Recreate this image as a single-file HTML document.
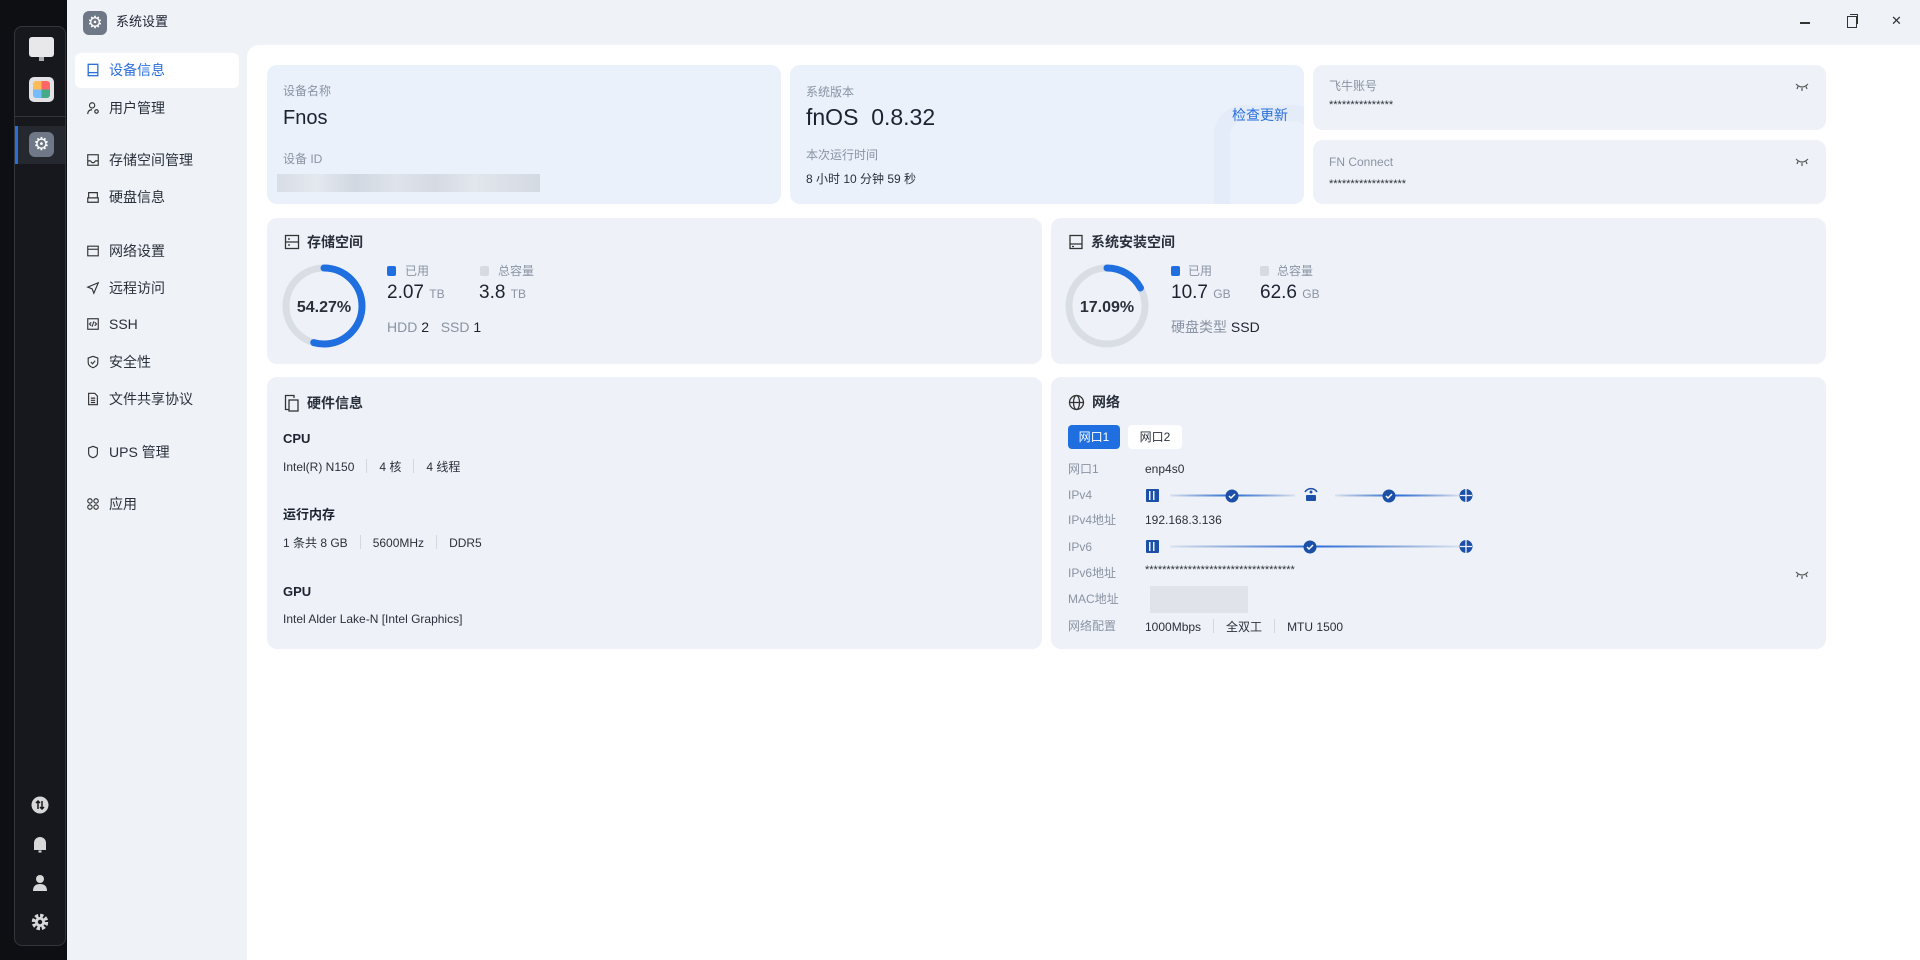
<!DOCTYPE html>
<html><head><meta charset="utf-8">
<style>
*{margin:0;padding:0;box-sizing:border-box}
body{width:1920px;height:960px;overflow:hidden;background:#0e0f12;font-family:"Liberation Sans","Noto Sans CJK SC",sans-serif;color:#1c2230;position:relative;line-height:1.2}
.a{position:absolute;white-space:nowrap}
#dock{left:14px;top:26px;width:52px;height:920px;background:#17181d;border:1px solid #33353c;border-radius:8px}
#win{left:67px;top:0;width:1853px;height:960px;background:#eff3f8}
#content{left:247px;top:45px;width:1673px;height:915px;background:#fff;border-top-left-radius:12px}
.card{position:absolute;background:#eef2f8;border-radius:10px}
.blue{background:#eaf1fb}
.lbl{color:#8a93a3;font-size:12px}
.nav{position:absolute;left:86px;font-size:14px;color:#2a303b;display:flex;align-items:center;gap:9px}
.nav svg{width:14px;height:14px}
.ttl{font-size:14px;font-weight:bold;color:#2a303b;display:flex;align-items:center;gap:7px}
.sep{display:inline-block;width:1px;height:14px;background:#d3d8e0;margin:0 12px;vertical-align:-2px}
.line{font-size:12px;color:#2a303b}
</style></head><body>
<div class="a" id="dock"></div>
<div class="a" style="left:29px;top:37px;width:25px;height:20px;background:#e8e8ea;border-radius:3px"></div>
<div class="a" style="left:39px;top:57px;width:5px;height:4px;background:#aaa"></div>
<div class="a" style="left:29px;top:77px;width:25px;height:25px;background:#e2e2e4;border-radius:5px"></div>
<div class="a" style="left:33px;top:81px;width:17px;height:17px;background:conic-gradient(#f66 0 25%,#4a8 0 50%,#7bf 0 75%,#fb5 0);border-radius:3px"></div>
<div class="a" style="left:14px;top:116px;width:52px;height:1px;background:#33353c"></div>
<div class="a" style="left:15px;top:126px;width:50px;height:38px;background:#26282f"></div>
<div class="a" style="left:15px;top:126px;width:3px;height:38px;background:#2a6fdb"></div>
<div class="a" style="left:29px;top:132px;width:25px;height:25px;background:#6f7886;border-radius:6px;color:#fff;font-size:18px;text-align:center;line-height:25px">⚙</div>
<svg class="a" style="left:30px;top:795px" width="20" height="20"><circle cx="10" cy="10" r="8.5" fill="#d8d8da"/><path d="M8 6v8M6 8l2-2 2 2M12 14V6M10 12l2 2 2-2" stroke="#17181d" stroke-width="1.5" fill="none"/></svg>
<svg class="a" style="left:30px;top:834px" width="20" height="20"><path d="M4 16V9a6 6 0 0 1 12 0v7z" fill="#d8d8da"/><rect x="8.5" y="16.5" width="3" height="2" fill="#d8d8da"/></svg>
<svg class="a" style="left:30px;top:873px" width="20" height="20"><circle cx="10" cy="6" r="4" fill="#d8d8da"/><path d="M3 18q0-7 7-7t7 7z" fill="#d8d8da"/></svg>
<svg class="a" style="left:30px;top:912px" width="20" height="20"><circle cx="10" cy="10" r="6" fill="none" stroke="#d8d8da" stroke-width="4.5" stroke-dasharray="3 1.7"/><circle cx="10" cy="10" r="5" fill="#d8d8da"/><circle cx="10" cy="10" r="2.2" fill="#17181d"/></svg>

<div class="a" id="win"></div>
<div class="a" style="left:83px;top:11px;width:24px;height:24px;background:#6f7886;border-radius:6px;color:#fff;font-size:17px;text-align:center;line-height:24px">⚙</div>
<div class="a" style="left:116px;top:14px;font-size:13px;color:#1c2230">系统设置</div>
<div class="a" style="left:1800px;top:22px;width:10px;height:1.5px;background:#333"></div>
<div class="a" style="left:1847px;top:16px;width:10px;height:12px;border:1.3px solid #333"></div>
<div class="a" style="left:1850px;top:14px;width:8px;height:10px;border-top:1.3px solid #333;border-right:1.3px solid #333"></div>
<div class="a" style="left:1891px;top:13px;font-size:13px;color:#333">✕</div>

<div class="a" style="left:75px;top:53px;width:164px;height:35px;background:#fff;border-radius:6px"></div>
<div class="nav" style="top:62px;color:#2a6fdb"><svg viewBox="0 0 16 16"><rect x="2.5" y="1.5" width="11" height="13" fill="none" stroke="#2a6fdb" stroke-width="1.5"/><path d="M3 11h10" stroke="#2a6fdb" stroke-width="1.5"/></svg>设备信息</div>
<div class="nav" style="top:100px"><svg viewBox="0 0 16 16" fill="none" stroke="#333" stroke-width="1.3"><circle cx="7" cy="5" r="3"/><path d="M2 15q0-5 5-5"/><circle cx="12" cy="12" r="2"/></svg>用户管理</div>
<div class="nav" style="top:152px"><svg viewBox="0 0 16 16" fill="none" stroke="#333" stroke-width="1.3"><rect x="2" y="2" width="12" height="12"/><path d="M2 9h3l2 2 2 0 2-2h3"/></svg>存储空间管理</div>
<div class="nav" style="top:189px"><svg viewBox="0 0 16 16" fill="none" stroke="#333" stroke-width="1.3"><path d="M3 9V3h10v6M2 9h12v5H2z"/></svg>硬盘信息</div>
<div class="nav" style="top:243px"><svg viewBox="0 0 16 16" fill="none" stroke="#333" stroke-width="1.3"><rect x="2" y="2.5" width="12" height="11"/><path d="M2 6h12"/></svg>网络设置</div>
<div class="nav" style="top:280px"><svg viewBox="0 0 16 16" fill="none" stroke="#333" stroke-width="1.3"><path d="M14 2L2 7l5 2 2 5z"/></svg>远程访问</div>
<div class="nav" style="top:316px"><svg viewBox="0 0 16 16" fill="none" stroke="#333" stroke-width="1.3"><rect x="2" y="2" width="12" height="12"/><path d="M6 6L4 8l2 2M10 6l2 2-2 2M9 5l-2 6"/></svg>SSH</div>
<div class="nav" style="top:354px"><svg viewBox="0 0 16 16" fill="none" stroke="#333" stroke-width="1.3"><path d="M8 1.5l5.5 2v5q0 4-5.5 6-5.5-2-5.5-6v-5z"/><path d="M5.5 8l2 2 3-3.5"/></svg>安全性</div>
<div class="nav" style="top:391px"><svg viewBox="0 0 16 16" fill="none" stroke="#333" stroke-width="1.3"><path d="M3 1.5h7l3 3v10H3z"/><path d="M5.5 7h5M5.5 9.5h5M5.5 12h5"/></svg>文件共享协议</div>
<div class="nav" style="top:444px"><svg viewBox="0 0 16 16" fill="none" stroke="#333" stroke-width="1.3"><path d="M8 1.5l5 2v6q0 3.5-5 5-5-1.5-5-5v-6z"/></svg>UPS 管理</div>
<div class="nav" style="top:496px"><svg viewBox="0 0 16 16" fill="none" stroke="#333" stroke-width="1.3"><circle cx="4.5" cy="4.5" r="2.5"/><circle cx="11.5" cy="4.5" r="2.5"/><circle cx="4.5" cy="11.5" r="2.5"/><circle cx="11.5" cy="11.5" r="2.5"/></svg>应用</div>

<div class="a" id="content"></div>

<div class="card blue" style="left:267px;top:65px;width:514px;height:139px"></div>
<div class="a lbl" style="left:283px;top:84px">设备名称</div>
<div class="a" style="left:283px;top:106px;font-size:20px;font-weight:500">Fnos</div>
<div class="a lbl" style="left:283px;top:152px">设备 ID</div>
<div class="a" style="left:277px;top:174px;width:263px;height:18px;background:linear-gradient(90deg,#d6dbe3,#e3e7ee 15%,#cfd5de 30%,#dde2e9 45%,#d3d8e0 60%,#e1e5ec 75%,#d2d7df);opacity:.9"></div>

<div class="card blue" style="left:790px;top:65px;width:514px;height:139px;overflow:hidden"><div style="position:absolute;right:-20px;top:40px;width:110px;height:130px;border:16px solid #e3ecf8;border-radius:30px"></div></div>
<div class="a lbl" style="left:806px;top:85px">系统版本</div>
<div class="a" style="left:806px;top:104px;font-size:23px;font-weight:500">fnOS&nbsp;&nbsp;0.8.32</div>
<div class="a" style="left:1232px;top:107px;font-size:14px;color:#2a6fdb">检查更新</div>
<div class="a lbl" style="left:806px;top:148px">本次运行时间</div>
<div class="a line" style="left:806px;top:172px">8 小时 10 分钟 59 秒</div>

<div class="card" style="left:1313px;top:65px;width:513px;height:65px"></div>
<div class="a lbl" style="left:1329px;top:79px">飞牛账号</div>
<div class="a line" style="left:1329px;top:99px;font-size:11px">***************</div>
<div class="card" style="left:1313px;top:140px;width:513px;height:64px"></div>
<div class="a lbl" style="left:1329px;top:155px">FN Connect</div>
<div class="a line" style="left:1329px;top:178px;font-size:11px">******************</div>
<svg class="a" style="left:1795px;top:82px" width="14" height="10"><path d="M1 2q6 6 12 0M3 4.5L2 7M7 6v3M11 4.5l1 2.5" stroke="#555" stroke-width="1.2" fill="none"/></svg>
<svg class="a" style="left:1795px;top:157px" width="14" height="10"><path d="M1 2q6 6 12 0M3 4.5L2 7M7 6v3M11 4.5l1 2.5" stroke="#555" stroke-width="1.2" fill="none"/></svg>

<div class="card" style="left:267px;top:218px;width:775px;height:146px"></div>
<div class="a ttl" style="left:284px;top:234px"><svg width="16" height="16" viewBox="0 0 16 16" fill="none" stroke="#333" stroke-width="1.3"><rect x="1.5" y="1.5" width="13" height="13"/><path d="M1.5 8h13M4 5h2M4 11h2"/></svg>存储空间</div>
<svg class="a" style="left:280px;top:262px" width="88" height="88"><circle cx="44" cy="44" r="38" fill="none" stroke="#d9dde4" stroke-width="7"/><circle cx="44" cy="44" r="38" fill="none" stroke="#1f6fe0" stroke-width="7" stroke-dasharray="129.6 400" transform="rotate(-90 44 44)" stroke-linecap="round"/><text x="44" y="50" text-anchor="middle" font-size="16" font-weight="bold" fill="#2a303b" font-family="Liberation Sans">54.27%</text></svg>
<div class="a" style="left:387px;top:266px;width:9px;height:10px;background:#1f6fe0;border-radius:2px"></div>
<div class="a lbl" style="left:405px;top:264px">已用</div>
<div class="a" style="left:480px;top:266px;width:9px;height:10px;background:#d6dae1;border-radius:2px"></div>
<div class="a lbl" style="left:498px;top:264px">总容量</div>
<div class="a" style="left:387px;top:282px;font-size:19px">2.07 <span class="lbl" style="font-size:12px">TB</span></div>
<div class="a" style="left:479px;top:282px;font-size:19px">3.8 <span class="lbl" style="font-size:12px">TB</span></div>
<div class="a" style="left:387px;top:319px;font-size:14px"><span class="lbl" style="font-size:14px">HDD</span> 2&nbsp;&nbsp;&nbsp;<span class="lbl" style="font-size:14px">SSD</span> 1</div>

<div class="card" style="left:1051px;top:218px;width:775px;height:146px"></div>
<div class="a ttl" style="left:1068px;top:234px"><svg width="16" height="16" viewBox="0 0 16 16" fill="none" stroke="#333" stroke-width="1.3"><rect x="2" y="1.5" width="12" height="13"/><path d="M2 10h12M4 12.5h2"/></svg>系统安装空间</div>
<svg class="a" style="left:1063px;top:262px" width="88" height="88"><circle cx="44" cy="44" r="38" fill="none" stroke="#d9dde4" stroke-width="7"/><circle cx="44" cy="44" r="38" fill="none" stroke="#1f6fe0" stroke-width="7" stroke-dasharray="40.8 400" transform="rotate(-90 44 44)" stroke-linecap="round"/><text x="44" y="50" text-anchor="middle" font-size="16" font-weight="bold" fill="#2a303b" font-family="Liberation Sans">17.09%</text></svg>
<div class="a" style="left:1171px;top:266px;width:9px;height:10px;background:#1f6fe0;border-radius:2px"></div>
<div class="a lbl" style="left:1188px;top:264px">已用</div>
<div class="a" style="left:1260px;top:266px;width:9px;height:10px;background:#d6dae1;border-radius:2px"></div>
<div class="a lbl" style="left:1277px;top:264px">总容量</div>
<div class="a" style="left:1171px;top:282px;font-size:19px">10.7 <span class="lbl" style="font-size:12px">GB</span></div>
<div class="a" style="left:1260px;top:282px;font-size:19px">62.6 <span class="lbl" style="font-size:12px">GB</span></div>
<div class="a" style="left:1171px;top:319px;font-size:14px"><span class="lbl" style="font-size:14px">硬盘类型</span> SSD</div>

<div class="card" style="left:267px;top:377px;width:775px;height:272px"></div>
<div class="a ttl" style="left:284px;top:394px"><svg width="16" height="18" viewBox="0 0 16 18" fill="none" stroke="#333" stroke-width="1.3"><path d="M10 4V1.5H1.5v14H5"/><rect x="5" y="6" width="9" height="11"/></svg>硬件信息</div>
<div class="a" style="left:283px;top:431px;font-size:13px;font-weight:bold">CPU</div>
<div class="a line" style="left:283px;top:459px">Intel(R) N150<span class="sep"></span>4 核<span class="sep"></span>4 线程</div>
<div class="a" style="left:283px;top:507px;font-size:13px;font-weight:bold">运行内存</div>
<div class="a line" style="left:283px;top:535px">1 条共 8 GB<span class="sep"></span>5600MHz<span class="sep"></span>DDR5</div>
<div class="a" style="left:283px;top:584px;font-size:13px;font-weight:bold">GPU</div>
<div class="a line" style="left:283px;top:612px">Intel Alder Lake-N [Intel Graphics]</div>

<div class="card" style="left:1051px;top:377px;width:775px;height:272px"></div>
<div class="a ttl" style="left:1068px;top:394px"><svg width="17" height="17" viewBox="0 0 17 17" fill="none" stroke="#333" stroke-width="1.3"><circle cx="8.5" cy="8.5" r="7"/><ellipse cx="8.5" cy="8.5" rx="3" ry="7"/><path d="M1.5 8.5h14"/></svg>网络</div>
<div class="a" style="left:1068px;top:425px;width:52px;height:24px;background:#1f6fe0;border-radius:4px;color:#fff;font-size:12px;text-align:center;line-height:24px">网口1</div>
<div class="a" style="left:1128px;top:425px;width:54px;height:24px;background:#fff;border-radius:4px;color:#2a303b;font-size:12px;text-align:center;line-height:24px">网口2</div>
<div class="a lbl" style="left:1068px;top:462px">网口1</div><div class="a line" style="left:1145px;top:462px">enp4s0</div>
<div class="a lbl" style="left:1068px;top:488px">IPv4</div>
<div class="a lbl" style="left:1068px;top:513px">IPv4地址</div><div class="a line" style="left:1145px;top:513px">192.168.3.136</div>
<div class="a lbl" style="left:1068px;top:540px">IPv6</div>
<div class="a lbl" style="left:1068px;top:566px">IPv6地址</div><div class="a line" style="left:1145px;top:564px;font-size:11px">***********************************</div>
<div class="a lbl" style="left:1068px;top:592px">MAC地址</div><div class="a" style="left:1150px;top:586px;width:98px;height:27px;background:#e0e4ea"></div>
<div class="a lbl" style="left:1068px;top:619px">网络配置</div><div class="a line" style="left:1145px;top:619px">1000Mbps<span class="sep"></span>全双工<span class="sep"></span>MTU 1500</div>
<svg class="a" style="left:1795px;top:570px" width="14" height="10"><path d="M1 2q6 6 12 0M3 4.5L2 7M7 6v3M11 4.5l1 2.5" stroke="#555" stroke-width="1.2" fill="none"/></svg>

<svg class="a" style="left:1140px;top:483px" width="340" height="75">
<defs><linearGradient id="g1"><stop offset="0" stop-color="#1b4fa8" stop-opacity=".1"/><stop offset=".5" stop-color="#2a6fdb"/><stop offset="1" stop-color="#1b4fa8" stop-opacity=".1"/></linearGradient></defs>
<g fill="#1b4fa8">
<rect x="6" y="6" width="13" height="13" rx="1"/><rect x="9" y="8" width="1.5" height="9" fill="#eef2f8"/><rect x="13" y="8" width="1.5" height="9" fill="#eef2f8"/>
<rect x="6" y="57" width="13" height="13" rx="1"/><rect x="9" y="59" width="1.5" height="9" fill="#eef2f8"/><rect x="13" y="59" width="1.5" height="9" fill="#eef2f8"/>
</g>
<rect x="30" y="11.5" width="125" height="2" fill="url(#g1)"/>
<rect x="195" y="11.5" width="125" height="2" fill="url(#g1)"/>
<rect x="30" y="62.5" width="290" height="2" fill="url(#g1)"/>
<g fill="#1b4fa8"><circle cx="92" cy="13" r="6.5"/><circle cx="249" cy="13" r="6.5"/><circle cx="170" cy="64" r="6.5"/></g>
<g stroke="#fff" stroke-width="1.5" fill="none"><path d="M89 13l2 2 4-4M246 13l2 2 4-4M167 64l2 2 4-4"/></g>
<g fill="#1b4fa8"><rect x="166" y="12" width="10" height="6" rx="1"/><path d="M165 9a7 7 0 0 1 12 0" stroke="#1b4fa8" stroke-width="1.5" fill="none"/><circle cx="171" cy="9" r="1.5"/></g>
<g><circle cx="326" cy="12.5" r="6.5" fill="#1b4fa8"/><path d="M326 6v13M320 12.5h12" stroke="#eef2f8" stroke-width="1.3"/><circle cx="326" cy="63.5" r="6.5" fill="#1b4fa8"/><path d="M326 57v13M320 63.5h12" stroke="#eef2f8" stroke-width="1.3"/></g>
</svg>
</body></html>
